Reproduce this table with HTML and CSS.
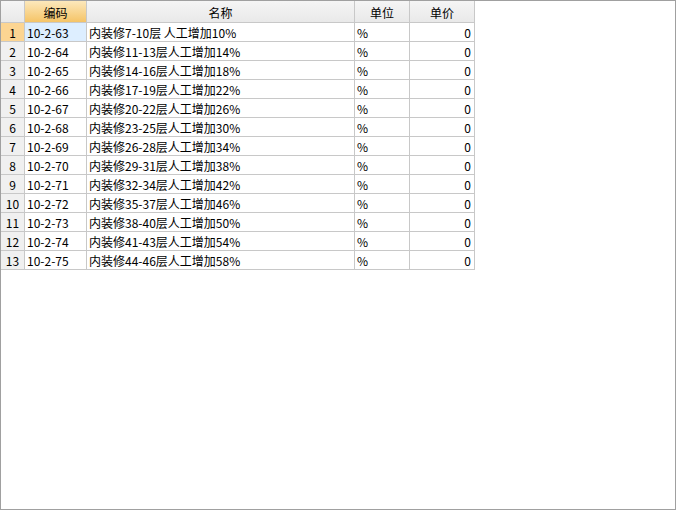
FILE: index.html
```html
<!DOCTYPE html>
<html lang="zh">
<head>
<meta charset="utf-8">
<link rel="stylesheet" href="styles.css">
</head>
<body>
<div class="frame">
  <div class="grid">
    <div class="hd corner"></div>
    <div class="hd sel">编码</div>
    <div class="hd">名称</div>
    <div class="hd">单位</div>
    <div class="hd">单价</div>

    <div class="rn cur">1</div><div class="c code active">10-2-63</div><div class="c">内装修7-10层 人工增加10%</div><div class="c">%</div><div class="c num">0</div>
    <div class="rn">2</div><div class="c code">10-2-64</div><div class="c">内装修11-13层人工增加14%</div><div class="c">%</div><div class="c num">0</div>
    <div class="rn">3</div><div class="c code">10-2-65</div><div class="c">内装修14-16层人工增加18%</div><div class="c">%</div><div class="c num">0</div>
    <div class="rn">4</div><div class="c code">10-2-66</div><div class="c">内装修17-19层人工增加22%</div><div class="c">%</div><div class="c num">0</div>
    <div class="rn">5</div><div class="c code">10-2-67</div><div class="c">内装修20-22层人工增加26%</div><div class="c">%</div><div class="c num">0</div>
    <div class="rn">6</div><div class="c code">10-2-68</div><div class="c">内装修23-25层人工增加30%</div><div class="c">%</div><div class="c num">0</div>
    <div class="rn">7</div><div class="c code">10-2-69</div><div class="c">内装修26-28层人工增加34%</div><div class="c">%</div><div class="c num">0</div>
    <div class="rn">8</div><div class="c code">10-2-70</div><div class="c">内装修29-31层人工增加38%</div><div class="c">%</div><div class="c num">0</div>
    <div class="rn">9</div><div class="c code">10-2-71</div><div class="c">内装修32-34层人工增加42%</div><div class="c">%</div><div class="c num">0</div>
    <div class="rn">10</div><div class="c code">10-2-72</div><div class="c">内装修35-37层人工增加46%</div><div class="c">%</div><div class="c num">0</div>
    <div class="rn">11</div><div class="c code">10-2-73</div><div class="c">内装修38-40层人工增加50%</div><div class="c">%</div><div class="c num">0</div>
    <div class="rn">12</div><div class="c code">10-2-74</div><div class="c">内装修41-43层人工增加54%</div><div class="c">%</div><div class="c num">0</div>
    <div class="rn">13</div><div class="c code">10-2-75</div><div class="c">内装修44-46层人工增加58%</div><div class="c">%</div><div class="c num">0</div>
  </div>
</div>
</body>
</html>
```

FILE: styles.css
```css
html, body {
  margin: 0;
  padding: 0;
  background: #ffffff;
}
.frame {
  box-sizing: border-box;
  width: 676px;
  height: 510px;
  border: 1px solid #a0a0a0;
  background: #ffffff;
  font-family: "Noto Sans CJK SC", "Liberation Sans", sans-serif;
  font-size: 12px;
  color: #000000;
}
.grid {
  display: grid;
  grid-template-columns: 24px 62px 268px 55px 65px;
  grid-template-rows: 22px repeat(13, 19px);
  width: 474px;
}
.grid > div {
  box-sizing: border-box;
  border-right: 1px solid #c8c8c8;
  border-bottom: 1px solid #c8c8c8;
  white-space: nowrap;
  overflow: hidden;
}
.hd {
  background: linear-gradient(#f5f5f5, #e9e9e9);
  text-align: center;
  line-height: 21px;
  padding-top: 1px;
}
.hd.sel {
  background: linear-gradient(#fce8bc, #f5c467);
}
.rn {
  background: #f0f0f0;
  text-align: center;
  line-height: 19px;
}
.rn.cur {
  background: #fcd592;
}
.c {
  line-height: 19px;
  padding-left: 2px;
}
.c.code {
  padding-left: 2px;
}
.c.active {
  background: #ddeeff;
}
.c.num {
  text-align: right;
  padding-right: 3px;
}
```
